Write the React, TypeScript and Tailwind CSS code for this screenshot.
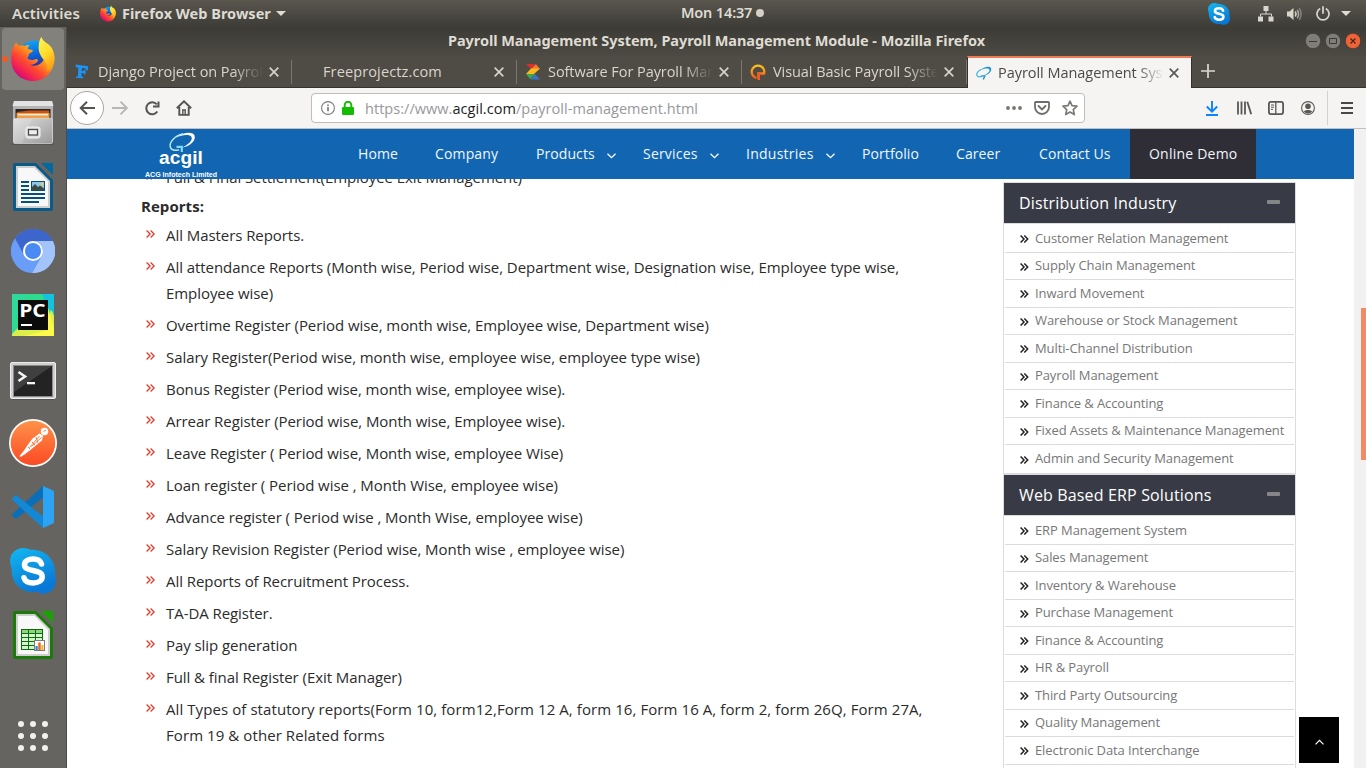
import type { ReactNode } from "react";

/* ---------- launcher artwork ---------- */

function FirefoxLogo({ className }: { className: string }) {
  return (
    <svg viewBox="0 0 44 46" className={className}>
      <defs>
        <linearGradient id="fxBody" x1="0.85" y1="0.1" x2="0.15" y2="0.9">
          <stop offset="0" stopColor="#ffd53a" />
          <stop offset="0.35" stopColor="#ff9a1c" />
          <stop offset="0.6" stopColor="#ff4a30" />
          <stop offset="0.85" stopColor="#ee1a5c" />
          <stop offset="1" stopColor="#c20a86" />
        </linearGradient>
        <linearGradient id="fxGlobe" x1="0.4" y1="0" x2="0.6" y2="1">
          <stop offset="0" stopColor="#0fa5f5" />
          <stop offset="0.5" stopColor="#0a5fd8" />
          <stop offset="1" stopColor="#321f83" />
        </linearGradient>
        <linearGradient id="fxFlame" x1="0.2" y1="0" x2="0.6" y2="1">
          <stop offset="0" stopColor="#fff44f" />
          <stop offset="0.5" stopColor="#ffdc2e" />
          <stop offset="1" stopColor="#ff980e" />
        </linearGradient>
      </defs>
      <circle cx="23" cy="20" r="15.5" fill="url(#fxGlobe)" />
      <path fill="url(#fxBody)" d="M5.2 6.2c.6 1.8 1.600 3 3 3.700 1.700-.5 3.500-.4 5 .1 1.700-.8 4-1.300 5.600-1-1.500 1.300-2.200 2.600-2 4 .9.500 3.700.6 4.900.9.600 1.300-.5 2.300-2.500 3.200-1 .5-1.600 1.300-1.500 2.500l-1.400 2.700c1.500 1.500 4 2 6.500 1.400 1.800-.8 3.400-1 4.400.4-.6 2.500-4 4.800-8.200 5 4.300 1.800 10 .3 13-4 2.800-4.500 1.800-11-.5-15L39 11c4 4.300 5.300 11 3.800 17C40.500 38 32.500 45 22 45 9.500 45 .2 35.500.2 24 0 16.500 2 10 5.200 6.200z" />
      <path fill="url(#fxFlame)" d="M30.300.7c.9 3 3 5 5.800 6.700 4.500 2.800 7 7.100 7.400 13.600.2 5.500-2.600 11.500-8 15 1.600-4.600 1.300-7.500-1.600-11-3-3.200-6.300-7.500-6.300-13.500 0-4 .9-7.600 2.700-10.800z" />
    </svg>
  );
}

function FilesIcon() {
  return (
    <svg viewBox="0 0 44 46" className="h-[46px] w-11">
      <defs>
        <linearGradient id="cab" x1="0" y1="0" x2="1" y2="1">
          <stop offset="0" stopColor="#dcdcdc" />
          <stop offset="0.5" stopColor="#bdbdbd" />
          <stop offset="1" stopColor="#9a9a9a" />
        </linearGradient>
      </defs>
      <rect x="1" y="42" width="42" height="3" rx="1.500" fill="#4a4945" opacity=".6" />
      <path d="M3 1h38l1 5v36H2V6z" fill="#b4b4b4" />
      <path d="M3 1h38l1.500 5h-41z" fill="#e3e3e3" />
      <rect x="4.500" y="9" width="35" height="11" fill="#2a2522" />
      <path d="M6 12l12-1.500h20V20H6z" fill="#c4531e" />
      <rect x="5.500" y="13" width="33" height="7" fill="#efa04e" />
      <rect x="7" y="14" width="30" height="1.300" fill="#fff1dd" />
      <rect x="2.500" y="18.500" width="39" height="25" rx="1" fill="url(#cab)" stroke="#d9d9d9" strokeWidth=".7" />
      <path d="M3 19h18L11 43H3z" fill="#fff" opacity=".16" />
      <rect x="15" y="27" width="14" height="11" rx="2" fill="#dedede" stroke="#f4f4f4" />
      <rect x="17.500" y="29.500" width="9" height="5.500" fill="#efefef" stroke="#4b4b4b" strokeWidth="1.300" />
    </svg>
  );
}

function DocumentIcon({ kind }: { kind: "writer" | "calc" }) {
  const writer = kind === "writer";
  const c = writer ? "#0a5a8a" : "#1b7a0a";
  const fold = writer ? "#0369a3" : "#18a303";
  return (
    <svg viewBox="0 0 40 48" className="h-12 w-10">
      <path d="M2 0h21l17 17v29a2 2 0 0 1-2 2H2a2 2 0 0 1-2-2V2a2 2 0 0 1 2-2z" fill={c} />
      <path d="M3 3h19l15 15v27H3z" fill="#cfcfcf" />
      <path d="M5 5h16.500L35 18.500V43H5z" fill="#f8f8f8" />
      <path d="M28 0h11a1 1 0 0 1 1 1v11z" fill={fold} />
      {writer ? (
        <g fill="#0a4f7c">
          <rect x="8" y="18" width="8" height="2" />
          <rect x="8" y="22" width="8" height="2" />
          <rect x="8" y="26" width="8" height="2" />
          <rect x="8" y="30" width="24" height="2" />
          <rect x="8" y="34" width="24" height="2" />
          <rect x="8" y="38" width="18" height="2" />
          <rect x="18" y="18" width="14" height="10" />
          <rect x="19" y="19" width="12" height="8" fill="#8cc6e8" />
          <path d="M19 27v-3l3-3 3 3 2-1.500 4 3V27z" fill="#3c4a42" />
          <circle cx="29" cy="21" r="1.500" fill="#f7c948" />
        </g>
      ) : (
        <g>
          <rect x="8" y="18" width="22" height="21" fill="#0f6b10" />
          {[19, 23, 27, 31, 35].map((y) =>
            [9, 16, 23].map((x) => (
              <rect key={`${x}-${y}`} x={x} y={y} width="6" height="3" fill={y === 19 ? "#8ed67e" : "#d5f7cc"} />
            )),
          )}
          <rect x="21.500" y="29.500" width="10" height="10" fill="#fff" stroke="#7c7c7c" />
          <rect x="22.500" y="35" width="2.200" height="4" fill="#2686d8" />
          <rect x="25.300" y="31.500" width="2.400" height="7.500" fill="#e8651b" />
          <rect x="28.300" y="34" width="2.200" height="5" fill="#efb72b" />
        </g>
      )}
    </svg>
  );
}

function ChromiumIcon() {
  return (
    <svg viewBox="0 0 44 44" className="size-11">
      <circle cx="22" cy="22" r="22" fill="#5b8def" />
      <path d="M4 9.500A22 22 0 0 1 41.800 12H22a10 10 0 0 0-8.700 15z" fill="#3c66cc" />
      <path d="M41.800 12A22 22 0 0 1 21 44l9.700-17A10 10 0 0 0 22 12z" fill="#a2c4fb" />
      <path d="M4 9.500A22 22 0 0 0 21 44l9-16.500a10 10 0 0 1-16.700-.5z" fill="#6a9df8" />
      <circle cx="22" cy="22" r="10" fill="#fff" />
      <circle cx="22" cy="22" r="8" fill="#4a8af4" />
    </svg>
  );
}

function PyCharmIcon() {
  return (
    <svg viewBox="0 0 42 42" className="size-[42px]">
      <rect width="42" height="42" fill="#2fd99a" />
      <path d="M30 0h12v26L30 6z" fill="#12c9e6" />
      <path d="M16 0h14l12 24v12H14L0 32z" fill="#2ddc8c" />
      <path d="M0 40L6 34l30 2 3-24-9-12h3l9 22v20H0z" fill="#dcee48" />
      <path d="M30 0h12v18l-6-3z" fill="#14c3dc" />
      <path d="M36 14l6 20v8H12l24-6z" fill="#fcf84a" />
      <rect x="6" y="6" width="30" height="30" fill="#0b0b0b" />
      <rect x="9" y="30" width="11" height="2" fill="#fff" />
      <text x="7.200" y="22.500" fill="#fff" fontFamily="Open Sans, sans-serif" fontWeight="700" fontSize="18.500" textLength="26.500" lengthAdjust="spacingAndGlyphs">
        PC
      </text>
    </svg>
  );
}

function TerminalIcon() {
  return (
    <svg viewBox="0 0 46 38" className="mt-1 h-[38px] w-[46px]">
      <rect x="1" y="34" width="44" height="4" rx="2" fill="#45443f" opacity=".5" />
      <rect x=".5" y=".5" width="45" height="36" rx="1.500" fill="#cfcfcf" stroke="#ededed" />
      <rect x="3.500" y="3.500" width="39" height="31" fill="#232323" stroke="#8b8b8b" />
      <path d="M4 4h38L4 30z" fill="#fff" opacity=".13" />
      <path d="M8.500 10l6.500 4.500L8.500 19" fill="none" stroke="#f4f4f4" strokeWidth="2.600" />
      <rect x="17" y="20" width="8" height="2.300" fill="#f4f4f4" />
    </svg>
  );
}

function PostmanIcon() {
  return (
    <svg viewBox="0 0 48 48" className="size-12">
      <defs>
        <linearGradient id="pm" x1="0" y1="0" x2="0" y2="1">
          <stop offset="0" stopColor="#ff9248" />
          <stop offset="1" stopColor="#fb4a24" />
        </linearGradient>
      </defs>
      <circle cx="24" cy="24" r="24" fill="#fff" />
      <circle cx="24" cy="24" r="22.300" fill="url(#pm)" />
      <circle cx="35.500" cy="12.500" r="3.700" fill="#fff" />
      <path d="M34.500 12.500l2.500-1.500" stroke="#f47a48" strokeWidth="1" />
      <path d="M30.500 14.500l3.500 2-1 5-5 4-6 5-6.500 5-4 2.500-1-1 4.500-5.500 4-6 4.500-6z" fill="#fff" />
      <path d="M30.500 17L20.500 28.500M32.500 18.500l-10 9M27 18l2 6M23 23l3 3M19 28l2 2" stroke="#fa703b" strokeWidth=".9" fill="none" />
    </svg>
  );
}

function CodeIcon() {
  return (
    <svg viewBox="0 0 42 42" className="size-[42px]">
      <path d="M31 0v11.500L5 32.300a1.500 1.500 0 0 1-2-.1L.5 30a1.500 1.500 0 0 1 0-2.200z" fill="#0b6fb8" />
      <path d="M31 42V30.500L5 9.700a1.500 1.500 0 0 0-2 .1L.5 12a1.500 1.500 0 0 0 0 2.200z" fill="#1488d4" />
      <path d="M31 0l10 4.500a1.500 1.500 0 0 1 1 1.400v30.200a1.500 1.500 0 0 1-1 1.400L31 42z" fill="#2ba4f3" />
    </svg>
  );
}

function SkypeIcon({ className }: { className: string }) {
  return (
    <svg viewBox="0 0 46 46" className={className}>
      <defs>
        <linearGradient id="sk" x1="0" y1="0" x2=".4" y2="1">
          <stop offset="0" stopColor="#12b7f0" />
          <stop offset="1" stopColor="#0a78d6" />
        </linearGradient>
      </defs>
      <path d="M13 0c4 0 6 1.500 8 1.700C33 1.500 44 9 45 22c.1 2-.3 4 .2 6 1.500 4 .8 10-3 14-4 4-10 4.500-14 2.500-2-.8-4-.2-6-.3C10 43.500 1.500 34 1.700 22c0-2-1.700-5-1.700-9C0 5.500 6 0 13 0z" fill="url(#sk)" />
      <path
        d="M31.500 16c-1-3.500-4.300-5-8.400-5-5 0-8.600 2-8.600 5.700 0 3.500 3 4.700 8.500 5.800 6 1.200 9.200 2.200 9.200 6.200 0 4-4 6.200-8.900 6.200-5 0-8.300-1.700-9.300-5.200"
        fill="none"
        stroke="#fff"
        strokeWidth="5.500"
        strokeLinecap="round"
      />
    </svg>
  );
}

function AppGridIcon() {
  return (
    <svg viewBox="0 0 30 30" className="size-[30px]" fill="#f2f1f0">
      {[3, 15, 27].map((y) => [3, 15, 27].map((x) => <circle key={`${x}-${y}`} cx={x} cy={y} r="3" />))}
    </svg>
  );
}

function DockItem({ children, active }: { children: ReactNode; active?: boolean }) {
  return (
    <div className="flex h-16 w-full items-center justify-center">
      <div
        className={
          active
            ? "relative flex size-[62px] items-center justify-center rounded bg-[#83817c]"
            : "flex size-[62px] items-center justify-center"
        }
      >
        {active && <span className="absolute top-[28px] left-0 size-[6px] rounded-full bg-[#f05a28]" />}
        {children}
      </div>
    </div>
  );
}

function Dock() {
  return (
    <aside className="flex w-[67px] shrink-0 flex-col border-r border-[#4d4c47] bg-[#666460]">
      <DockItem active>
        <FirefoxLogo className="h-[46px] w-11" />
      </DockItem>
      <DockItem><FilesIcon /></DockItem>
      <DockItem><DocumentIcon kind="writer" /></DockItem>
      <DockItem><ChromiumIcon /></DockItem>
      <DockItem><PyCharmIcon /></DockItem>
      <DockItem><TerminalIcon /></DockItem>
      <DockItem><PostmanIcon /></DockItem>
      <DockItem><CodeIcon /></DockItem>
      <DockItem><SkypeIcon className="size-[46px]" /></DockItem>
      <DockItem><DocumentIcon kind="calc" /></DockItem>
      <div className="mt-auto mb-[17px] flex justify-center"><AppGridIcon /></div>
    </aside>
  );
}

/* ---------- desktop top bar ---------- */

function TopBar() {
  return (
    <header className="flex h-[27px] shrink-0 items-center bg-linear-to-b from-[#5a574f] to-[#3d3c37] font-['Noto_Sans',sans-serif] text-[14.5px] text-[#dfdbd2]">
      <div className="flex w-[681px] items-center pl-3">
        <span className="w-[88px] text-[15px] font-semibold tracking-[0.1px]">Activities</span>
        <FirefoxLogo className="mr-[6px] h-[17px] w-4" />
        <span className="font-bold tracking-[0.02px] whitespace-nowrap">Firefox Web Browser</span>
        <svg viewBox="0 0 10 5" className="ml-[5px] h-[5px] w-[10px]"><path d="M0 0h10L5 5z" fill="#dfdbd2" /></svg>
      </div>
      <span className="-mt-px font-semibold tracking-[-0.15px] whitespace-nowrap">Mon 14:37</span>
      <span className="-mt-px ml-1 size-2 rounded-full bg-[#d3d0c8]" />
      <div className="ml-auto flex items-center pr-[15px]">
        <SkypeIcon className="mr-[28px] size-[22px]" />
        <svg viewBox="0 0 16 16" className="mr-[13px] size-4" fill="#d9d6ce">
          <path d="M5.500 0h5v5h-5zM0 10.500h5v5H0zM10.500 10.500h5v5h-5z" />
          <path d="M8 5v3M2.500 10.500V8h11v2.500" fill="none" stroke="#d9d6ce" />
        </svg>
        <svg viewBox="0 0 16 14" className="mr-[13px] h-[14px] w-4">
          <path d="M0 4.500h2.500L6.500 1v12L2.500 9.500H0z" fill="#d9d6ce" />
          <path d="M8.300 4.500q1.500 2.500 0 5" stroke="#d9d6ce" strokeWidth="1.500" fill="none" />
          <path d="M10.300 2.800q2.500 4.200 0 8.400" stroke="#b0ada5" strokeWidth="1.500" fill="none" />
          <path d="M12.300 1.200q3.600 5.800 0 11.600" stroke="#85827b" strokeWidth="1.500" fill="none" />
        </svg>
        <svg viewBox="0 0 14 15" className="mr-[11px] h-[15px] w-[14px]" fill="none" stroke="#d9d6ce" strokeWidth="1.700">
          <path d="M4.200 2.600a6 6 0 1 0 5.600 0M7 .300v7.500" />
        </svg>
        <svg viewBox="0 0 10 5" className="h-[5px] w-[10px]"><path d="M0 0h10L5 5z" fill="#dfdbd2" /></svg>
      </div>
    </header>
  );
}

/* ---------- browser window ---------- */

function TitleBar() {
  return (
    <div className="flex h-[29px] shrink-0 items-center bg-linear-to-b from-[#3c3b36] to-[#4c4a43] pb-[2px] pl-[381px] font-['Noto_Sans',sans-serif]">
      <span className="text-[14.5px] font-bold tracking-[-0.05px] whitespace-nowrap text-[#dfdbd2]">
        Payroll Management System, Payroll Management Module - Mozilla Firefox
      </span>
      <div className="ml-auto flex gap-1 pr-[5px]">
        <svg viewBox="0 0 16 16" className="size-4"><circle cx="8" cy="8" r="7.700" fill="#7f7d76" stroke="#33322e" strokeWidth=".6" /><path d="M4 8.500h8" stroke="#3a3935" /></svg>
        <svg viewBox="0 0 16 16" className="size-4"><circle cx="8" cy="8" r="7.700" fill="#7f7d76" stroke="#33322e" strokeWidth=".6" /><path d="M4.500 5.500h7v5h-7z" fill="none" stroke="#3a3935" /></svg>
        <svg viewBox="0 0 16 16" className="size-4"><circle cx="8" cy="8" r="7.700" fill="#ee6337" stroke="#33322e" strokeWidth=".6" /><path d="M5.500 5.500l5 5m0-5l-5 5" stroke="#4a241a" strokeWidth="1.200" /></svg>
      </div>
    </div>
  );
}

function CloseX({ color }: { color: string }) {
  return (
    <svg viewBox="0 0 10 10" className="size-[10px] shrink-0"><path d="M.700.700l8.600 8.600m0-8.600L.700 9.300" stroke={color} strokeWidth="1.700" /></svg>
  );
}

function Tab({ icon, label }: { icon?: ReactNode; label: string }) {
  return (
    <div className="flex h-8 w-[225px] shrink-0 items-center border-b border-[#33322e]">
      <div className="flex w-[31px] shrink-0 items-center pl-2">{icon}</div>
      <div className="w-[165px] shrink-0 overflow-hidden mask-r-from-82% text-[14.5px] tracking-[-0.06px] whitespace-nowrap text-[#dad6cc]">{label}</div>
      <div className="flex w-[28px] justify-start pl-[6px]"><CloseX color="#d6d2c8" /></div>
      <div className="h-6 w-px bg-[#7b786f]" />
    </div>
  );
}

function TabStrip() {
  return (
    <div className="flex h-8 shrink-0 bg-[#4f4c45] font-['Open_Sans',sans-serif]">
      <Tab
        label="Django Project on Payroll"
        icon={
          <svg viewBox="0 0 14 16" className="h-4 w-[14px]" fill="#1b93f8">
            <path d="M.5.500L13.300 2.200l-.6 4.300-1.500-.2-.8-2-3.400-.3L6.700 7l2.200.1.400-1.300h1.300l-.2 4.800H9l-.3-1.600-2.100-.1-.2 3.300 1.800.5v1.600l-7-.4V12.500l1.700-.2.400-8.400L1 3z" />
          </svg>
        }
      />
      <div className="flex h-8 w-[225px] shrink-0 items-center border-b border-[#33322e] pl-[31px]">
        <div className="w-[165px] shrink-0 text-[14.5px] tracking-[0.13px] whitespace-nowrap text-[#dad6cc]">Freeprojectz.com</div>
        <div className="flex w-[28px] pl-[6px]"><CloseX color="#d6d2c8" /></div>
        <div className="h-6 w-px bg-[#7b786f]" />
      </div>
      <Tab
        label="Software For Payroll Manage"
        icon={
          <svg viewBox="0 0 16 16" className="size-4">
            <path d="M1 0h10L6 5z" fill="#d9302b" />
            <path d="M11 .300L15 5H6z" fill="#f0793a" />
            <path d="M6 4.500h9L9 10H1z" fill="#fbb91c" />
            <path d="M1 10h9l-5 5z" fill="#3ea849" />
            <path d="M10 10l5 5.500H5z" fill="#3b76c4" />
          </svg>
        }
      />
      <Tab
        label="Visual Basic Payroll System"
        icon={
          <svg viewBox="0 0 16 16" className="size-4">
            <defs><linearGradient id="q" x1="0" y1="0" x2="0" y2="1"><stop offset="0" stopColor="#fdc31c" /><stop offset="1" stopColor="#f4561c" /></linearGradient></defs>
            <path d="M6.500 14A6.300 6.300 0 1 1 14.100 9.500H8.500V15" fill="none" stroke="url(#q)" strokeWidth="2.300" />
            <path d="M7.500 8.500h4v2.500h-1.500v5H7.500z" fill="#f25a1e" />
          </svg>
        }
      />
      <div className="flex h-8 w-[225px] shrink-0 items-center border-x border-t-2 border-x-[#33322e] border-t-[#ee7b52] bg-[#f5f4f2] pl-[8px]">
        <div className="w-[22px] shrink-0">
          <svg viewBox="0 0 16 14" className="h-[14px] w-4">
            <path d="M4.200 4.200C8 .8 13.500-.3 15 2.200c1.300 3.300-3 6.800-7.200 7.300 3.500-1.300 6.300-3.700 5.700-5.700C12.800 1.800 8.500 2.300 4.200 4.200z" fill="#1a93d2" />
            <path d="M5 3.600C1.500 5.300.200 8 .900 9.500c.7 1.500 3 1.500 5.100.9" fill="none" stroke="#35b3e6" strokeWidth="1.100" />
            <path d="M5.300 9.900h3.500l-1.500 3.600" fill="none" stroke="#1a93d2" strokeWidth="1.400" />
          </svg>
        </div>
        <div className="w-[166px] shrink-0 overflow-hidden mask-r-from-84% text-[14.5px] tracking-[-0.04px] whitespace-nowrap text-[#4c4a47]">Payroll Management System</div>
        <div className="flex pl-[5px]"><CloseX color="#5c5a57" /></div>
      </div>
      <div className="flex h-8 flex-1 items-center border-b border-[#33322e] pb-px pl-[9px]">
        <svg viewBox="0 0 14 14" className="size-[14px]"><path d="M7 0v14M0 7h14" stroke="#dcd8cf" strokeWidth="1.700" /></svg>
      </div>
    </div>
  );
}

function Toolbar() {
  return (
    <div className="flex h-[41px] shrink-0 items-center border-b border-[#c4c0bd] bg-[#f5f4f2] font-['Open_Sans',sans-serif]">
      <div className="ml-[3px] flex size-[34px] shrink-0 items-center justify-center rounded-full border border-[#aaa7a3] bg-white">
        <svg viewBox="0 0 16 14" className="h-[14px] w-4" fill="none" stroke="#555350" strokeWidth="2"><path d="M16 7H1.500M8 .7L1.700 7 8 13.300" /></svg>
      </div>
      <svg viewBox="0 0 16 14" className="ml-2 h-[14px] w-4 shrink-0" fill="none" stroke="#b9b7b4" strokeWidth="1.900"><path d="M0 7h14.500M8.500.700L14.800 7l-6.300 6.300" /></svg>
      <svg viewBox="0 0 16 15" className="ml-4 h-[15px] w-4 shrink-0" fill="none" stroke="#555350" strokeWidth="2"><path d="M12.800 3.300A6 6 0 1 0 13.300 10.500M14.500.500v5H9" /></svg>
      <svg viewBox="0 0 16 16" className="ml-4 size-4 shrink-0" fill="none" stroke="#555350" strokeWidth="1.900">
        <path d="M.8 8.200L8 1.300l7.200 6.900M3.300 7v7.900h9.400V7" />
        <path d="M6.800 14.500V10h2.400v4.500" strokeWidth="1.400" />
      </svg>
      <div className="ml-[119px] flex h-[30px] w-[774px] shrink-0 items-center rounded border border-[#bfbcb9] bg-white pl-[9px]">
        <svg viewBox="0 0 14 14" className="size-[14px]" fill="none" stroke="#7b7b7b" strokeWidth="1.100"><circle cx="7" cy="7" r="6.400" /><path d="M7 6v4.200M7 3.500v1.500" strokeWidth="1.700" /></svg>
        <svg viewBox="0 0 12 14" className="ml-[7px] h-[14px] w-3"><rect y="6" width="12" height="8" rx="1" fill="#12bc00" /><path d="M2.700 6.500V4a3.300 3.300 0 0 1 6.600 0v2.500" fill="none" stroke="#12bc00" strokeWidth="1.900" /></svg>
        <div className="mt-[2px] ml-[11px] text-[14.5px] tracking-[0.04px] whitespace-nowrap text-[#98989a]">
          https://www.<span className="text-[#1c1c1c]">acgil.com</span>/payroll-management.html
        </div>
        <svg viewBox="0 0 16 4" className="ml-auto h-1 w-4" fill="#777572"><circle cx="2" cy="2" r="1.900" /><circle cx="8" cy="2" r="1.900" /><circle cx="14" cy="2" r="1.900" /></svg>
        <svg viewBox="0 0 16 14" className="ml-3 h-[14px] w-4" fill="none" stroke="#6f6d6a" strokeWidth="1.800"><path d="M1.800 1h12.400q.8 0 .8.800V6a7 7 0 0 1-14 0V1.800Q1 1 1.800 1z" /><path d="M4.500 5L8 8.400 11.500 5" strokeLinecap="round" /></svg>
        <svg viewBox="0 0 16 16" className="mr-[6px] ml-3 size-4" fill="none" stroke="#7c7a77" strokeWidth="1.700" strokeLinejoin="round"><path d="M8 1.200l2 4.500 5 .5-3.700 3.400 1 5L8 12.100l-4.300 2.500 1-5L1 6.200l5-.5z" /></svg>
      </div>
      <svg viewBox="0 0 12 15" className="ml-[121px] h-[15px] w-3 shrink-0" fill="none" stroke="#0a84ff" strokeWidth="1.900"><path d="M6 0v10.500M.8 5.500L6 10.700l5.200-5.200M0 14h12" /></svg>
      <svg viewBox="0 0 15 14" className="ml-[19px] h-[14px] w-[15px] shrink-0" fill="none" stroke="#5a5855" strokeWidth="1.800"><path d="M1 .500v13M4.500.500v13M8 .500v13M10.300.800L14.200 13.300" /></svg>
      <svg viewBox="0 0 16 14" className="ml-4 h-[14px] w-4 shrink-0" fill="none" stroke="#5a5855" strokeWidth="1.800"><rect x=".9" y=".9" width="14.200" height="12.200" rx="2" /><path d="M7.800 1v12" strokeWidth="1.300" /><path d="M3 4h3M3 6.200h3M3 8.400h2" strokeWidth="1" /></svg>
      <svg viewBox="0 0 14 14" className="ml-[17px] size-[14px] shrink-0"><circle cx="7" cy="7" r="6.400" fill="none" stroke="#5a5855" strokeWidth="1.100" /><circle cx="7" cy="5.300" r="2.800" fill="#5a5855" /><path d="M2.800 10.500q1.500-2 4.200-1.500 2.700-.5 4.200 1.500Q9.500 12.400 7 12.400T2.800 10.500z" fill="#5a5855" /></svg>
      <div className="ml-[12px] h-[34px] w-px bg-[#d3d1ce]" />
      <svg viewBox="0 0 12 12" className="ml-[13px] h-3 w-3 shrink-0" stroke="#4a4845" strokeWidth="2"><path d="M0 1h12M0 6h12M0 11h12" /></svg>
    </div>
  );
}

/* ---------- web page ---------- */

function AcgilLogo() {
  return (
    <svg viewBox="0 0 74 50" className="h-[50px] w-[74px]">
      <path d="M31 8.500C37 4 46.500 2 49.300 6c2.500 5-4 11.500-12.800 12.800C43 16 48 11.500 46.500 8 45 5 37 5.500 31 8.500z" fill="#fff" />
      <path d="M38 4.800C29.500 6.800 24 13.500 25.300 18c1 3.300 4.700 3.700 8.700 2.700" fill="none" stroke="#b5e8fa" strokeWidth="1.500" />
      <path d="M31.500 17.800h5.300V23" fill="none" stroke="#7fdcf6" strokeWidth="2.200" />
      <text x="14" y="35" fill="#fff" fontFamily="Liberation Sans, sans-serif" fontWeight="700" fontSize="18" textLength="44" lengthAdjust="spacingAndGlyphs">acgil</text>
      <text x="0" y="47.800" fill="#fff" fontFamily="Liberation Sans, sans-serif" fontWeight="700" fontSize="8" letterSpacing="0" textLength="72" lengthAdjust="spacingAndGlyphs">ACG Infotech Limited</text>
    </svg>
  );
}

function Chevron() {
  return (
    <svg viewBox="0 0 9 6" className="mt-[5px] h-[6px] w-[9px] shrink-0" fill="none" stroke="#fff" strokeWidth="1.300"><path d="M.5.700l4 4 4-4" /></svg>
  );
}

function SiteNav() {
  const item = "flex items-center pb-[2px] pl-[19px] whitespace-nowrap";
  const drop = "flex items-center justify-between pb-[2px] pl-[19px] whitespace-nowrap";
  return (
    <nav className="flex h-[50px] shrink-0 bg-[#1266b1] pl-[78px] text-[14px] tracking-[0.08px] text-[#f1f6fb]">
      <div className="w-[194px] shrink-0"><AcgilLogo /></div>
      <div className={`${item} w-[77px]`}>Home</div>
      <div className={`${item} w-[101px] tracking-[0.15px]`}>Company</div>
      <div className={`${drop} w-[99px]`}>Products<Chevron /></div>
      <div className={`${drop} ml-2 w-[95px] tracking-[0.2px]`}>Services<Chevron /></div>
      <div className={`${drop} ml-2 w-[108px] tracking-[0.25px]`}>Industries<Chevron /></div>
      <div className={`${item} ml-2 w-[94px]`}>Portfolio</div>
      <div className={`${item} w-[83px]`}>Career</div>
      <div className={`${item} w-[110px]`}>Contact Us</div>
      <div className={`${item} w-[126px] bg-[#2f2e37] tracking-[0.22px]`}>Online Demo</div>
    </nav>
  );
}

function DoubleAngle({ className }: { className: string }) {
  return (
    <svg viewBox="0 0 9 8" className={className} fill="none" stroke="currentColor" strokeWidth="1.300"><path d="M.6.500L4.100 4 .6 7.500M4.600.500L8.100 4 4.600 7.500" /></svg>
  );
}

const reports = [
  "All Masters Reports.",
  "All attendance Reports (Month wise, Period wise, Department wise, Designation wise, Employee type wise,\nEmployee wise)",
  "Overtime Register (Period wise, month wise, Employee wise, Department wise)",
  "Salary Register(Period wise, month wise, employee wise, employee type wise)",
  "Bonus Register (Period wise, month wise, employee wise).",
  "Arrear Register (Period wise, Month wise, Employee wise).",
  "Leave Register ( Period wise, Month wise, employee Wise)",
  "Loan register ( Period wise , Month Wise, employee wise)",
  "Advance register ( Period wise , Month Wise, employee wise)",
  "Salary Revision Register (Period wise, Month wise , employee wise)",
  "All Reports of Recruitment Process.",
  "TA-DA Register.",
  "Pay slip generation",
  "Full & final Register (Exit Manager)",
];

function Bullet({ text, track = "tracking-[-0.06px]" }: { text: string; track?: string }) {
  return (
    <li className="flex py-[3px] pl-[5px]">
      <DoubleAngle className="mt-[8px] mr-[11px] h-2 w-[9px] shrink-0 text-[#df3b30]" />
      <span className={`whitespace-pre ${track}`}>{text}</span>
    </li>
  );
}

function SideMenu({ title, items }: { title: string; items: string[] }) {
  return (
    <section className="border border-[#dcdcdc]">
      <h3 className="flex h-10 items-center justify-between bg-[#383b46] pr-[15px] pl-[15px] text-[16px] tracking-[0.15px] text-white">
        {title}
        <span className="mb-[3px] h-1 w-[13px] rounded-[1px] bg-[#858587]" />
      </h3>
      <ul className="border-t border-[#dcdcdc] p-px">
        {items.map((item, i) => (
          <li
            key={item}
            className={
              i === items.length - 1
                ? "flex h-[27px] items-center pl-[15px]"
                : "flex h-[27.5px] items-center border-b border-[#dcdcdc] pl-[15px]"
            }
          >
            <svg viewBox="0 0 9 8" className="mt-[2px] mr-[6px] h-2 w-[9px] shrink-0" fill="none" stroke="#222" strokeWidth="1.500"><path d="M.6.500L4 4 .6 7.500M4.300.500L7.700 4 4.300 7.500" /></svg>
            <span className="text-[13px] tracking-[-0.1px] whitespace-nowrap text-[#777]">{item}</span>
          </li>
        ))}
      </ul>
    </section>
  );
}

const distribution = [
  "Customer Relation Management",
  "Supply Chain Management",
  "Inward Movement",
  "Warehouse or Stock Management",
  "Multi-Channel Distribution",
  "Payroll Management",
  "Finance & Accounting",
  "Fixed Assets & Maintenance Management",
  "Admin and Security Management",
];

const erp = [
  "ERP Management System",
  "Sales Management",
  "Inventory & Warehouse",
  "Purchase Management",
  "Finance & Accounting",
  "HR & Payroll",
  "Third Party Outsourcing",
  "Quality Management",
  "Electronic Data Interchange",
  "",
];

function Page() {
  return (
    <div className="flex min-h-0 flex-1 bg-white font-['Open_Sans','Noto_Sans',sans-serif]">
      <div className="relative flex min-w-0 flex-1 flex-col">
        <SiteNav />
        <main className="flex min-h-0 flex-1 overflow-hidden pl-[74px]">
          <div className="-mt-[18px] w-[862px] shrink-0 text-[15px] leading-[26px] text-[#2b2b2b]">
            <ul><Bullet text="Full & Final Settlement(Employee Exit Management)" track="tracking-[-0.08px]" /></ul>
            <p className="font-bold tracking-[0.05px]">Reports:</p>
            <ul>
              {reports.map((r) => <Bullet key={r} text={r} />)}
              <Bullet
                track="tracking-[0.08px]"
                text={"All Types of statutory reports(Form 10, form12,Form 12 A, form 16, Form 16 A, form 2, form 26Q, Form 27A,\nForm 19 & other Related forms"}
              />
            </ul>
          </div>
          <div className="mt-[3px] w-[293px] shrink-0">
            <SideMenu title="Distribution Industry" items={distribution} />
            <SideMenu title="Web Based ERP Solutions" items={erp} />
          </div>
        </main>
        <div className="absolute right-[15px] bottom-[5px] flex h-[46px] w-10 items-center justify-center bg-black">
          <svg viewBox="0 0 9 6" className="mt-[3px] h-[6px] w-[9px]" fill="none" stroke="#fff" strokeWidth="1.200"><path d="M.5 5.300l4-4 4 4" /></svg>
        </div>
      </div>
      <div className="flex w-3 shrink-0 justify-end bg-[#f2f1f0] pt-[179px]">
        <div className="h-[152px] w-[5px] bg-[#f08b65]" />
      </div>
    </div>
  );
}

export default function App() {
  return (
    <div className="flex h-[768px] w-[1366px] flex-col overflow-hidden">
      <TopBar />
      <div className="flex min-h-0 flex-1">
        <Dock />
        <div className="flex min-w-0 flex-1 flex-col">
          <TitleBar />
          <TabStrip />
          <Toolbar />
          <Page />
        </div>
      </div>
    </div>
  );
}
